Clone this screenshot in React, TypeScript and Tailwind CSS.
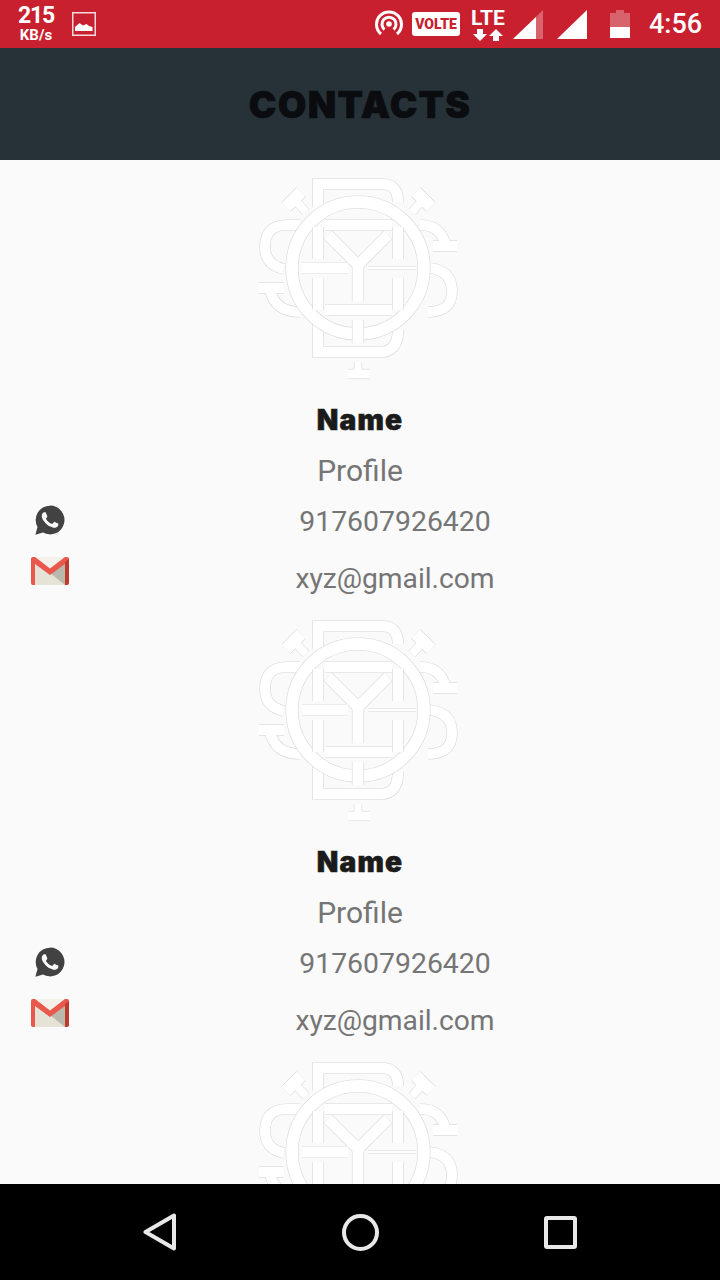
type Stroke = [string, number];

const outerStrokes: Stroke[] = [
  ['M78 42V19H142Q158 19 158 37', 10.5],
  ['M78 158V187H140Q158 187 158 165', 10.5],
  ['M60 60H47Q25 60 25 82Q25 100 44 104', 10],
  ['M190 103Q212 106 212 126Q212 147 188 147', 10],
  ['M61 27L46 42', 12],
  ['M55 35L66 47', 8],
  ['M176 27L191 42', 12],
  ['M183 35L172 47', 8],
  ['M180 60Q200 60 205 78', 10],
  ['M193 81H217', 10],
  ['M19 123H44', 10],
  ['M30 125Q35 147 60 147', 10],
];

const innerStrokes: Stroke[] = [
  ['M85 60H152', 10],
  ['M88 70L118 100L148 70', 11],
  ['M118 100V136', 11],
  ['M62 103H108', 11],
  ['M128 103H176', 2.5],
  ['M78 62V94', 10],
  ['M158 62V94', 10],
  ['M78 113V145', 10],
  ['M158 113V145', 10],
  ['M85 145H152', 10],
  ['M118 155V178', 11],
  ['M118 197V205', 7],
  ['M108 209H130', 9],
];

function StrokeGroup({ items }: { items: Stroke[] }) {
  return (
    <>
      {items.map(([d, w]) => (
        <path key={d} d={d} stroke="#d8d8d8" strokeWidth={w + 1.2} />
      ))}
      {items.map(([d, w]) => (
        <path key={d + 'w'} d={d} stroke="#ffffff" strokeWidth={w} />
      ))}
    </>
  );
}

function Logo() {
  return (
    <svg viewBox="18 12 200 204" className="w-[200px] h-[204px] ml-[-4px] shrink-0" fill="none">
      <StrokeGroup items={outerStrokes} />
      <circle cx="118" cy="103" r="66" stroke="#d8d8d8" strokeWidth="13" />
      <circle cx="118" cy="103" r="66" stroke="#ffffff" strokeWidth="11.8" />
      <StrokeGroup items={innerStrokes} />
    </svg>
  );
}

function WhatsappIcon() {
  return (
    <svg viewBox="0 0 24 24" className="w-[30px] h-[30px]">
      <path d="M12 0.5A11.5 11.5 0 1 1 6.4 22L0.3 23.7L2 17.6A11.5 11.5 0 0 1 12 0.5Z" fill="#424242" />
      <path
        transform="translate(-1.2 -1.2) scale(1.1)"
        fill="#fafafa"
        d="M17.472 14.382c-.297-.149-1.758-.867-2.03-.967-.273-.099-.471-.148-.67.15-.197.297-.767.966-.94 1.164-.173.199-.347.223-.644.075-.297-.15-1.255-.463-2.39-1.475-.883-.788-1.48-1.761-1.653-2.059-.173-.297-.018-.458.13-.606.134-.133.298-.347.446-.52.149-.174.198-.298.298-.497.099-.198.05-.371-.025-.52-.075-.149-.669-1.612-.916-2.207-.242-.579-.487-.5-.669-.51-.173-.008-.371-.01-.57-.01-.198 0-.52.074-.792.372-.272.297-1.04 1.016-1.04 2.479 0 1.462 1.065 2.875 1.213 3.074.149.198 2.096 3.2 5.077 4.487.709.306 1.262.489 1.694.625.712.227 1.36.195 1.871.118.571-.085 1.758-.719 2.006-1.413.248-.694.248-1.289.173-1.413-.074-.124-.272-.198-.57-.347z"
      />
    </svg>
  );
}

function GmailIcon() {
  return (
    <svg viewBox="0 0 38 28" className="w-[38px] h-[28px]">
      <rect x="0" y="0" width="38" height="28" rx="2" fill="#e5e2d6" />
      <path d="M4 0H34L19 13Z" fill="#f3f1ea" />
      <path d="M19 16L34 28V5Z" fill="#b9b8ac" />
      <path d="M0 2Q0 0 2 0H4L19 11.5L34 0H36Q38 0 38 2V4L19 18L4 7V28H2Q0 28 0 26Z" fill="#e8584c" />
      <path d="M34 5L38 2V26Q38 28 36 28H34Z" fill="#c0392f" />
    </svg>
  );
}

function ContactCard() {
  return (
    <div className="h-[442px] shrink-0 pt-[17px] flex flex-col">
      <div className="flex justify-center">
        <Logo />
      </div>
      <div className="mt-[14px] h-[50px] flex items-center justify-center text-[28px] font-black tracking-[1.2px] text-[#1b1b1b] font-['Inter',sans-serif] [-webkit-text-stroke:0.6px_#1b1b1b]">
        Name
      </div>
      <div className="h-[50px] flex items-center justify-center text-[30px] text-[#757575] font-['Roboto',sans-serif]">
        Profile
      </div>
      <div className="h-[52px] flex items-center">
        <div className="w-[100px] flex justify-center pb-[2px]">
          <WhatsappIcon />
        </div>
        <div className="flex-1 pr-[30px] pt-[2px] text-center text-[28.4px] text-[#757575] font-['Roboto',sans-serif]">
          917607926420
        </div>
      </div>
      <div className="mt-[7px] h-[48px] flex items-center">
        <div className="w-[100px] flex justify-center pb-[14px]">
          <GmailIcon />
        </div>
        <div className="flex-1 pr-[30px] pt-[2px] text-center text-[28.2px] text-[#757575] font-['Roboto',sans-serif]">
          xyz@gmail.com
        </div>
      </div>
    </div>
  );
}

function StatusBar() {
  return (
    <div className="h-12 shrink-0 bg-[#c9202f] flex items-center text-white font-['Roboto',sans-serif]">
      <div className="ml-[18px] w-[36px] flex flex-col items-center font-bold">
        <span className="text-[23px] leading-[20px] tracking-[-1.2px]">215</span>
        <span className="mt-[2px] text-[15px] leading-[14px]">KB/s</span>
      </div>
      <svg viewBox="0 0 24 24" className="ml-[18px] w-6 h-6">
        <rect x="0.75" y="0.75" width="22.5" height="22.5" fill="none" stroke="#f6d9dc" strokeWidth="1.5" />
        <path d="M3 19V15L7.5 11L11 13.5L14.5 12L17 14L20.5 15V19Z" fill="#ffffff" />
      </svg>
      <svg viewBox="0 0 28 28" className="ml-[279px] w-[28px] h-[28px]" fill="none" stroke="#ffffff" strokeWidth="3">
        <path d="M6 24A12.5 12.5 0 1 1 22 24" />
        <path d="M9.5 19.5A7 7 0 1 1 18.5 19.5" />
        <circle cx="14" cy="14" r="2.8" fill="#ffffff" stroke="none" />
      </svg>
      <div className="ml-[9px] w-[48px] h-6 rounded-[3px] bg-white flex items-center justify-center text-[#c9202f] text-[14px] font-black">
        VOLTE
      </div>
      <div className="ml-[10px] w-[36px] flex flex-col items-center">
        <span className="text-[21px] leading-[21px] font-bold">LTE</span>
        <svg viewBox="0 0 30 12" className="w-[30px] h-[12px]" fill="#ffffff">
          <path d="M4 0H10V5H14L7 12L0 5H4Z" />
          <path d="M23 0L30 7H26V12H20V7H16Z" />
        </svg>
      </div>
      <svg viewBox="0 0 30 29" className="ml-[7px] w-[30px] h-[29px]">
        <path d="M0 29L30 0V29Z" fill="#ffffff" fillOpacity="0.3" />
        <path d="M0 29L23 7V29Z" fill="#ffffff" />
      </svg>
      <svg viewBox="0 0 30 29" className="ml-[14px] w-[30px] h-[29px]">
        <path d="M0 29L30 0V29Z" fill="#ffffff" />
      </svg>
      <svg viewBox="0 0 20 28" className="ml-[23px] w-[20px] h-[28px]">
        <path d="M6 0H14V3H20V28H0V3H6Z" fill="#ffffff" fillOpacity="0.3" />
        <path d="M0 17H20V28H0Z" fill="#ffffff" />
      </svg>
      <span className="ml-[19px] text-[27px] font-medium leading-none">4:56</span>
    </div>
  );
}

function NavBar() {
  return (
    <div className="h-24 shrink-0 bg-black flex px-[60px]">
      <div className="w-[200px] flex items-center justify-center">
        <svg viewBox="0 0 34 38" className="w-[34px] h-[38px]" fill="none" stroke="#e8e8e8" strokeWidth="4" strokeLinejoin="round">
          <path d="M31 2.5V35.5L2.5 19Z" />
        </svg>
      </div>
      <div className="w-[200px] flex items-center justify-center">
        <div className="w-[37px] h-[37px] rounded-full border-4 border-[#e8e8e8]" />
      </div>
      <div className="w-[200px] flex items-center justify-center">
        <div className="w-[33px] h-[33px] rounded-[3px] border-4 border-[#e8e8e8]" />
      </div>
    </div>
  );
}

export default function App() {
  return (
    <div className="w-[720px] h-[1280px] flex flex-col overflow-hidden bg-[#fafafa]">
      <StatusBar />
      <div className="h-28 shrink-0 pt-[2px] bg-[#263238] flex items-center justify-center">
        <h1 className="text-[37px] font-black tracking-[1.3px] text-[#0a0c0f] font-['Inter',sans-serif] [-webkit-text-stroke:0.6px_#0a0c0f]">
          CONTACTS
        </h1>
      </div>
      <div className="flex-1 overflow-hidden flex flex-col">
        <ContactCard />
        <ContactCard />
        <div className="pt-[17px] flex justify-center">
          <Logo />
        </div>
      </div>
      <NavBar />
    </div>
  );
}
